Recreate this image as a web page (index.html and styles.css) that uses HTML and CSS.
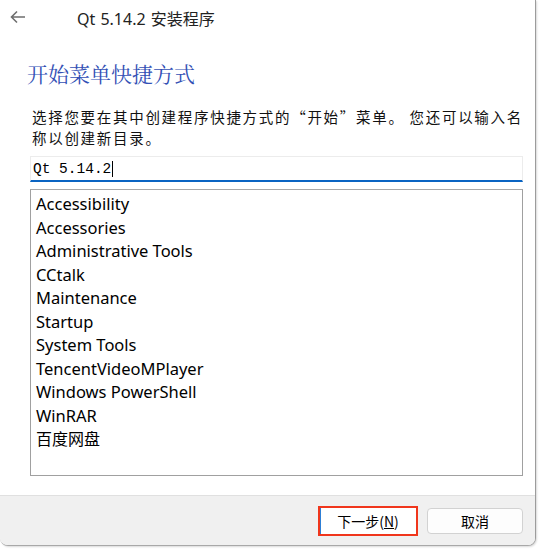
FILE: index.html
```html
<!DOCTYPE html>
<html lang="zh-CN">
<head>
<meta charset="utf-8">
<title>Qt 5.14.2 安装程序</title>
<link rel="stylesheet" href="styles.css">
</head>
<body>
<div class="window">
  <div class="titlebar">
    <svg class="back" width="18" height="14" viewBox="0 0 18 14"><path d="M16 7H3M8 1.5L2.5 7 8 12.5" fill="none" stroke="#6e6e6e" stroke-width="1.6"/></svg>
    <span class="title">Qt 5.14.2 安装程序</span>
  </div>
  <div class="content">
    <h1 class="heading">开始菜单快捷方式</h1>
    <p class="desc">选择您要在其中创建程序快捷方式的“开始”菜单。 您还可以输入名<br>称以创建新目录。</p>
    <div class="input"><span class="input-text">Qt 5.14.2</span><span class="caret"></span></div>
    <ul class="list">
      <li>Accessibility</li>
      <li>Accessories</li>
      <li>Administrative Tools</li>
      <li>CCtalk</li>
      <li>Maintenance</li>
      <li>Startup</li>
      <li>System Tools</li>
      <li>TencentVideoMPlayer</li>
      <li>Windows PowerShell</li>
      <li>WinRAR</li>
      <li class="cjk">百度网盘</li>
    </ul>
  </div>
  <div class="footer">
    <button class="btn btn-next">下一步(<u>N</u>)</button>
    <button class="btn btn-cancel">取消</button>
  </div>
</div>
</body>
</html>
```
FILE: styles.css
```css
* { box-sizing: border-box; }
html, body { margin: 0; padding: 0; background: #fff; }
body { width: 546px; height: 554px; overflow: hidden; }
.window {
  width: 536px;
  height: 546px;
  background: #fff;
  border-right: 1px solid #9c9c9c;
  border-bottom: 1px solid #a8a8a8;
  border-bottom-left-radius: 8px;
  border-bottom-right-radius: 8px;
  box-shadow: 1px 1px 2px rgba(0,0,0,0.15);
  display: flex;
  flex-direction: column;
  overflow: hidden;
}
.titlebar {
  height: 36px;
  display: flex;
  align-items: center;
  padding-left: 9px;
}
.back { display: block; margin-top: -2px; }
.title {
  margin-left: 50px;
  font-family: "Noto Sans", "Noto Sans CJK SC", sans-serif;
  font-size: 16px;
  color: #222;
  word-spacing: 1px;
}
.content {
  flex: 1;
  padding: 0 12px 0 30px;
  display: flex;
  flex-direction: column;
}
.heading {
  margin: 23px 0 0 -3px;
  font-family: "Noto Serif CJK SC", "Noto Sans CJK SC", serif;
  font-weight: normal;
  font-size: 21px;
  line-height: 28px;
  color: #3350b5;
}
.desc {
  margin: 19px 0 0 2px;
  font-family: "Noto Sans CJK SC", sans-serif;
  font-size: 14.5px;
  line-height: 21px;
  letter-spacing: 1.7px;
  color: #111;
  white-space: nowrap;
}
.input {
  margin-top: 8px;
  height: 26px;
  width: 493px;
  border: 1px solid #ececec;
  border-bottom: 2px solid #0a64c2;
  display: flex;
  align-items: center;
  padding-left: 2px;
}
.input-text {
  font-family: "Liberation Mono", monospace;
  font-size: 14.5px;
  color: #000;
  white-space: pre;
}
.caret {
  width: 1px;
  height: 16px;
  background: #000;
  margin-left: 1px;
}
.list {
  margin: 7px 0 0 0;
  padding: 2px 0 0 5px;
  list-style: none;
  width: 493px;
  height: 287px;
  border: 1px solid #a0a0a0;
  border-top-color: #a8a8a8;
}
.list li {
  font-family: "Noto Sans", "Noto Sans CJK SC", sans-serif;
  font-size: 16.5px;
  line-height: 23.5px;
  color: #000;
}
.list li.cjk { font-family: "Noto Sans CJK SC", sans-serif; font-size: 16px; }
.footer {
  height: 50px;
  background: #f0f0f0;
  border-top: 1px solid #e0e0e0;
  display: flex;
  justify-content: flex-end;
  align-items: center;
  gap: 9px;
  padding-right: 12px;
}
.btn {
  font-family: "Noto Sans CJK SC", sans-serif;
  font-size: 14px;
  color: #000;
  background: #fdfdfd;
  margin: 0;
  padding: 0;
}
.btn-next {
  width: 100px;
  height: 30px;
  border: 2px solid #f0361c;
  box-shadow: inset 1px 0 0 #2d7fd6;
  background: #fff;
}
.btn-cancel {
  width: 96px;
  height: 26px;
  border: 1px solid #d2d2d2;
  border-radius: 4px;
}
.btn u { text-decoration: underline; }
```
